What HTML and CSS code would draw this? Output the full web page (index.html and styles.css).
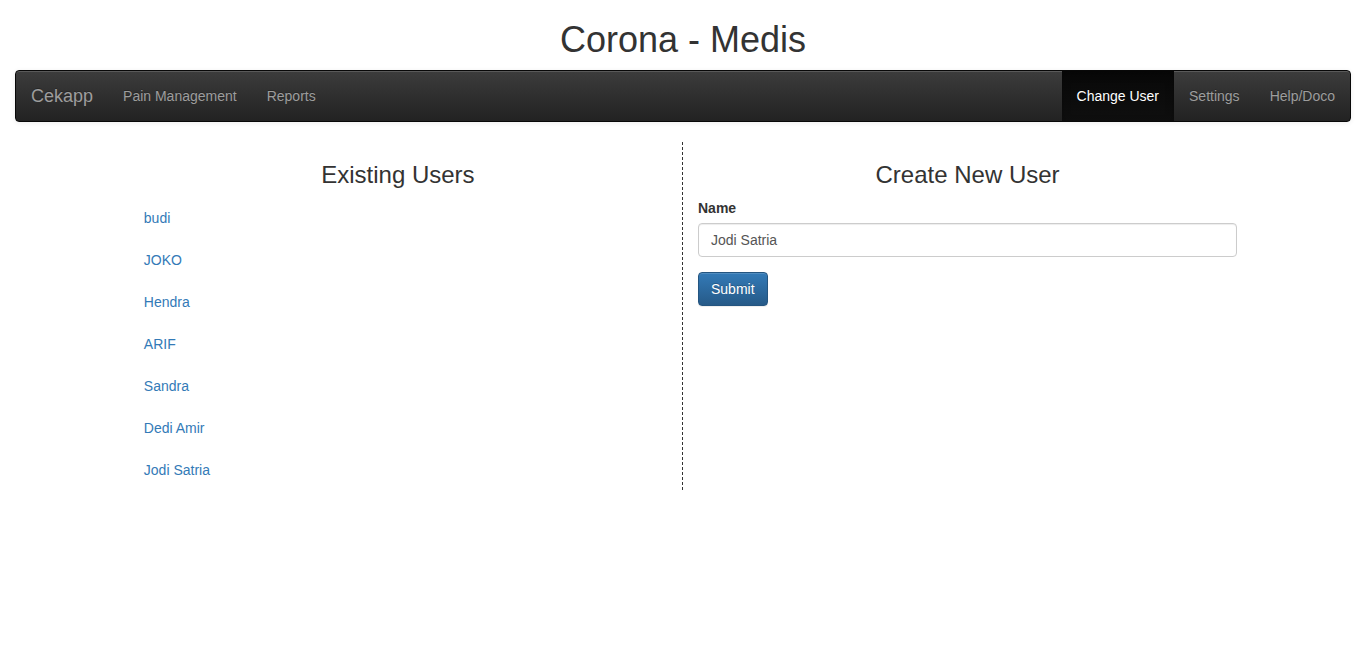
FILE: index.html
```html
<!DOCTYPE html>
<html lang="en">
<head>
<meta charset="utf-8">
<title>Corona - Medis</title>
<link rel="stylesheet" href="styles.css">
</head>
<body>
<div class="page">
  <h1 class="title">Corona - Medis</h1>
  <nav class="navbar">
    <div class="nav-left">
      <a class="brand" href="#">Cekapp</a>
      <a class="nav-link" href="#">Pain Management</a>
      <a class="nav-link" href="#">Reports</a>
    </div>
    <div class="nav-right">
      <a class="nav-link active" href="#">Change User</a>
      <a class="nav-link" href="#">Settings</a>
      <a class="nav-link" href="#">Help/Doco</a>
    </div>
  </nav>
  <div class="row">
    <div class="col col-left">
      <h3 class="heading">Existing Users</h3>
      <ul class="users">
        <li><a href="#">budi</a></li>
        <li><a href="#">JOKO</a></li>
        <li><a href="#">Hendra</a></li>
        <li><a href="#">ARIF</a></li>
        <li><a href="#">Sandra</a></li>
        <li><a href="#">Dedi Amir</a></li>
        <li><a href="#">Jodi Satria</a></li>
      </ul>
    </div>
    <div class="col col-right">
      <h3 class="heading">Create New User</h3>
      <form class="form">
        <div class="form-group">
          <label class="label" for="name">Name</label>
          <input class="input" id="name" type="text" value="Jodi Satria">
        </div>
        <button class="btn" type="button">Submit</button>
      </form>
    </div>
  </div>
</div>
</body>
</html>
```
FILE: styles.css
```css
* { box-sizing: border-box; }
html, body { margin: 0; padding: 0; }
body {
  font-family: "Liberation Sans", Arial, Helvetica, sans-serif;
  font-size: 14px;
  line-height: 20px;
  color: #333;
  background: #fff;
}
a { text-decoration: none; }
.page { padding: 0 15px; }
.title {
  margin: 20px 0 10px;
  font-size: 36px;
  line-height: 39.6px;
  font-weight: 500;
  text-align: center;
}
.navbar {
  display: flex;
  justify-content: space-between;
  height: 52px;
  margin-bottom: 20px;
  border: 1px solid #080808;
  border-radius: 4px;
  background-image: linear-gradient(to bottom, #3c3c3c 0%, #222 100%);
  box-shadow: inset 0 1px 0 rgba(255,255,255,.15), 0 1px 5px rgba(0,0,0,.075);
  overflow: hidden;
}
.nav-left, .nav-right { display: flex; }
.brand {
  padding: 15px;
  height: 50px;
  font-size: 18px;
  line-height: 20px;
  color: #9d9d9d;
  text-shadow: 0 -1px 0 rgba(0,0,0,.25);
}
.nav-link {
  padding: 15px;
  line-height: 20px;
  height: 50px;
  color: #9d9d9d;
  text-shadow: 0 -1px 0 rgba(0,0,0,.25);
}
.nav-link.active {
  color: #fff;
  background-image: linear-gradient(to bottom, #080808 0%, #0f0f0f 100%);
  box-shadow: inset 0 3px 9px rgba(0,0,0,.25);
}
.row {
  display: flex;
  margin: 0 -15px;
  align-items: flex-start;
}
.col { padding: 0 15px; width: 41.6667%; }
.col-left {
  margin-left: 8.3333%;
  border-right: 1px dashed #333;
}
.heading {
  margin: 20px 0 10px;
  font-size: 24px;
  line-height: 26.4px;
  font-weight: 500;
  text-align: center;
}
.users { list-style: none; margin: 0; padding: 0; }
.users li + li { margin-top: 2px; }
.users a {
  display: block;
  padding: 10px 15px;
  line-height: 20px;
  color: #337ab7;
}
.form-group { margin-bottom: 15px; }
.label {
  display: inline-block;
  margin-bottom: 5px;
  font-weight: 700;
}
.input {
  display: block;
  width: 100%;
  height: 34px;
  padding: 6px 12px;
  font-family: inherit;
  font-size: 14px;
  line-height: 20px;
  color: #555;
  background: #fff;
  border: 1px solid #ccc;
  border-radius: 4px;
  box-shadow: inset 0 1px 1px rgba(0,0,0,.075);
}
.btn {
  display: inline-block;
  height: 34px;
  padding: 6px 12px;
  font-family: inherit;
  font-size: 14px;
  line-height: 20px;
  color: #fff;
  background-image: linear-gradient(to bottom, #337ab7 0%, #265a88 100%);
  border: 1px solid #245580;
  border-radius: 4px;
  text-shadow: 0 -1px 0 rgba(0,0,0,.2);
  box-shadow: inset 0 1px 0 rgba(255,255,255,.15), 0 1px 1px rgba(0,0,0,.075);
  cursor: pointer;
}
```
